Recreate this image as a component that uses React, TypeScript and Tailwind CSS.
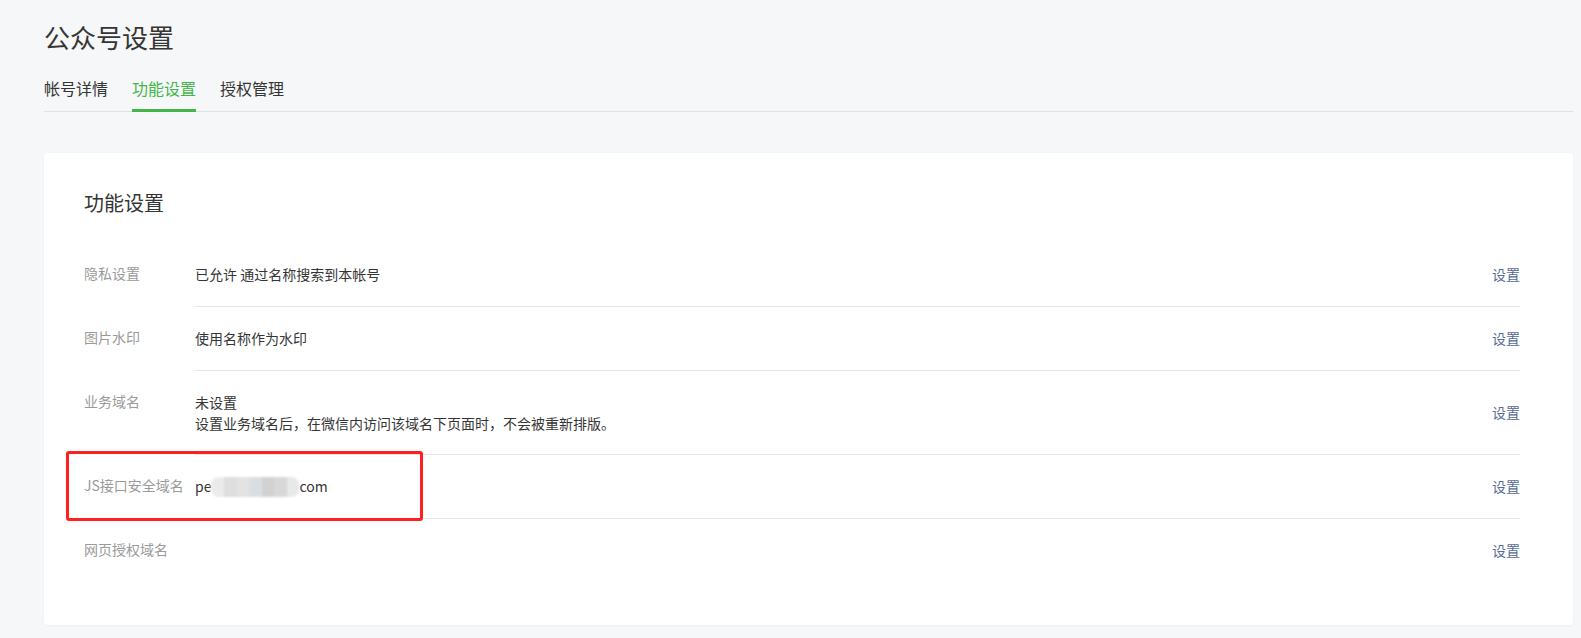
import React from 'react';

type Row = {
    label: string;
    value?: React.ReactNode;
};

const BlurredDomain = () => {
    const shades = ['#ebebeb', '#dedede', '#e3e3e3', '#dbdee0', '#d2d2d2', '#d8d8d8', '#e6e8ea'];
    return (
        <span className="inline-flex items-center">
            <span>pe</span>
            <span className="flex h-[20px] w-[88px] overflow-hidden rounded-[8px] blur-[1px]">
                {shades.map((c, i) => (
                    <span key={i} className="h-full flex-1" style={{ backgroundColor: c }} />
                ))}
            </span>
            <span>com</span>
        </span>
    );
};

const rows: Row[] = [
    { label: '隐私设置', value: '已允许 通过名称搜索到本帐号' },
    { label: '图片水印', value: '使用名称作为水印' },
    {
        label: '业务域名',
        value: (
            <>
                <div>未设置</div>
                <div className="leading-[20px]">设置业务域名后，在微信内访问该域名下页面时，不会被重新排版。</div>
            </>
        )
    },
    { label: 'JS接口安全域名', value: <BlurredDomain /> },
    { label: '网页授权域名' }
];

const tabs = ['帐号详情', '功能设置', '授权管理'];

export default function App() {
    const activeTab = 1;

    return (
        <div className="min-h-screen bg-[#f6f7f9] pl-[44px] pr-[8px] pt-[20px] font-['Noto_Sans_CJK_SC',sans-serif] text-[#353535]">
            <h1 className="text-[26px] leading-[34px] font-normal text-[#353535]">公众号设置</h1>

            {/* tabs */}
            <div className="mt-[22px] flex gap-[24px] border-b border-[#e0e1e3]">
                {tabs.map((t, i) => (
                    <div
                        key={t}
                        className={`pb-[9px] text-[16px] leading-[24px] ${
                            i === activeTab
                                ? 'border-b-[3px] border-[#44b549] text-[#44b549] -mb-[1px]'
                                : 'text-[#353535]'
                        }`}
                    >
                        {t}
                    </div>
                ))}
            </div>

            {/* card */}
            <div className="mt-[41px] rounded-[4px] bg-white pb-[43px] pl-[40px] pr-[53px] pt-[36px] shadow-[0_1px_3px_rgba(0,0,0,0.04)]">
                <h2 className="mb-[26px] text-[20px] leading-[28px] font-normal text-[#353535]">功能设置</h2>

                <div className="relative">
                    {rows.map((row, i) => (
                        <div key={row.label} className="flex text-[14px] leading-[21px]">
                            <div className="w-[111px] shrink-0 pt-[20px] text-[#9a9a9a]">{row.label}</div>
                            <div
                                className={`flex flex-1 items-center pb-[21px] pt-[21px] ${
                                    i < rows.length - 1 ? 'border-b border-[#e7e7eb]' : ''
                                }`}
                            >
                                <div className="flex-1 text-[#353535]">{row.value}</div>
                                <a className="cursor-pointer text-[#576b95]">设置</a>
                            </div>
                        </div>
                    ))}

                    {/* red annotation box */}
                    <div className="pointer-events-none absolute left-[-18px] top-[208px] h-[70px] w-[357px] rounded-[3px] border-[3px] border-[#ff1f1f]" />
                </div>
            </div>
        </div>
    );
}
